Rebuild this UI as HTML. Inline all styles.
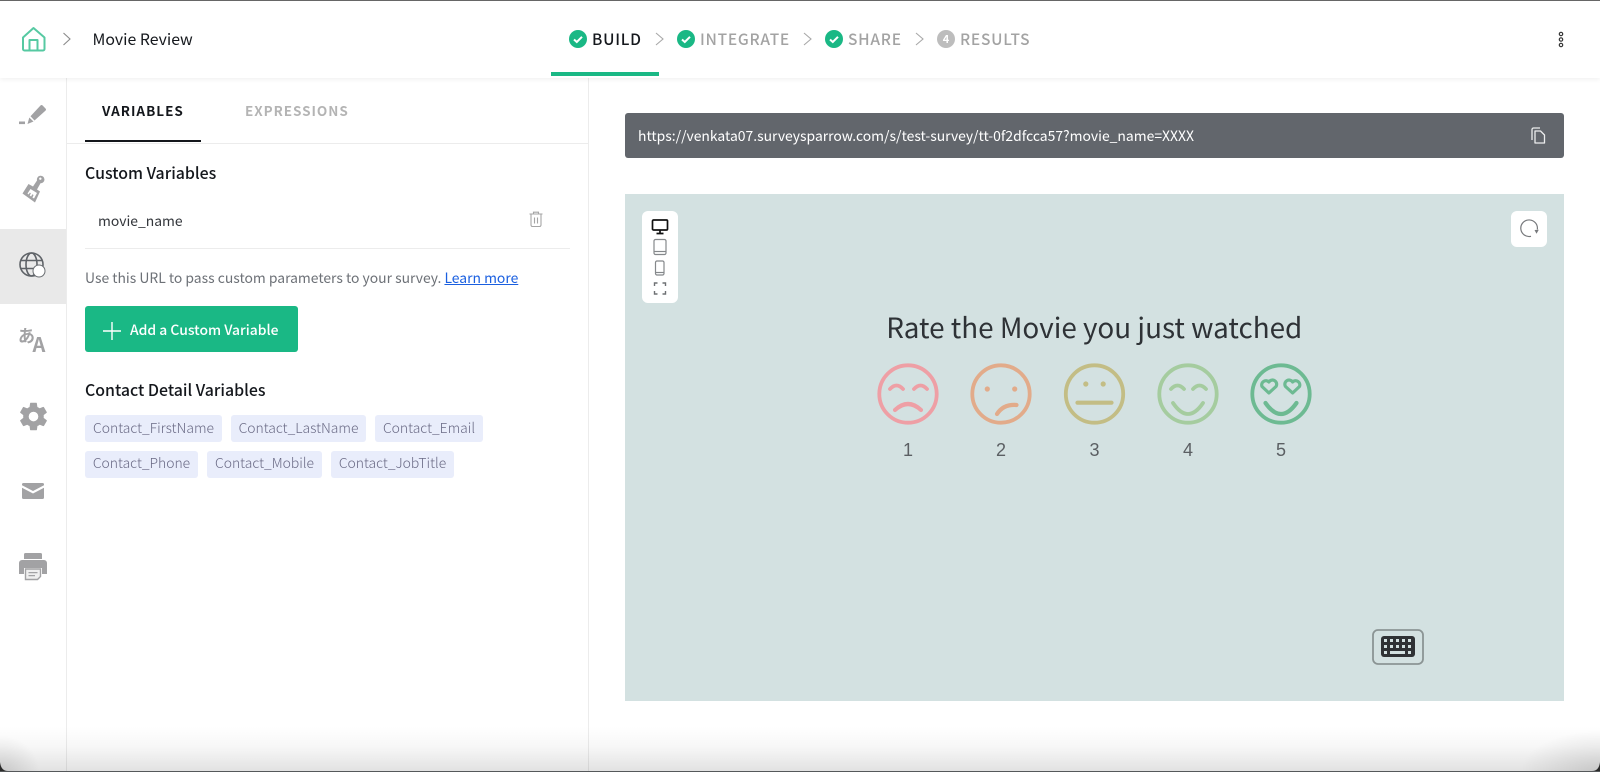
<!DOCTYPE html>
<html lang="en"><head><meta charset="utf-8"><title>Movie Review</title>
<style>
html,body{margin:0;padding:0;background:#fff}
body{width:1600px;height:772px;position:relative;overflow:hidden;font-family:"Noto Sans CJK JP","Liberation Sans",sans-serif;color:#14171c}
.a{position:absolute;white-space:nowrap}
svg{position:absolute;overflow:visible}
.chip{position:absolute;height:27px;line-height:26px;background:#e9edfb;border-radius:3px;color:#6a6a85;font-size:13.900px;text-align:center;font-weight:300}
.st{position:absolute;top:27.500px;line-height:22px;font-size:15.500px;font-weight:500;letter-spacing:.75px;color:#a3a3a3}
</style></head><body>
<div class="a" style="left:0;top:0;width:1600px;height:1.300px;background:#666;z-index:4"></div>
<div class="a" style="left:0;top:1px;width:1600px;height:77px;background:#fff;box-shadow:0 1px 5px rgba(0,0,0,.07);z-index:2"></div>
<div style="position:absolute;left:0;top:0;width:1600px;height:78px;z-index:3">
<svg style="left:22px;top:27px" width="24" height="25" viewBox="0 0 24 25" fill="none" stroke="#56c9a2" stroke-width="2" stroke-linejoin="round"><path d="M1 10.500 11.500 1 22.500 10.500V22a1.500 1.500 0 0 1-1.500 1.500H2.500A1.500 1.500 0 0 1 1 22Z"/><path d="M7.500 23.500V13h8v10.500"/></svg>
<svg style="left:62px;top:32px" width="10" height="14" viewBox="0 0 10 14" fill="none" stroke="#8a8a8a" stroke-width="1.100"><path d="M1.500 1 8 7 1.500 13"/></svg>
<div class="a" style="left:92.500px;top:27px;font-size:15.850px;line-height:24px;color:#15181d">Movie Review</div>
<svg style="left:569px;top:30px" width="18" height="18" viewBox="0 0 18 18"><circle cx="9" cy="9" r="9" fill="#1ab885"/><path d="M5 9.500 7.800 12 13 6.800" fill="none" stroke="#fff" stroke-width="2"/></svg>
<div class="st" style="left:592px;color:#15181d">BUILD</div>
<svg style="left:655px;top:32px" width="9" height="14" viewBox="0 0 9 14" fill="none" stroke="#a8a8a8" stroke-width="1.100"><path d="M1 1 8 7 1 13"/></svg>
<svg style="left:677px;top:30px" width="18" height="18" viewBox="0 0 18 18"><circle cx="9" cy="9" r="9" fill="#1ab885"/><path d="M5 9.500 7.800 12 13 6.800" fill="none" stroke="#fff" stroke-width="2"/></svg>
<div class="st" style="left:700px">INTEGRATE</div>
<svg style="left:803px;top:32px" width="9" height="14" viewBox="0 0 9 14" fill="none" stroke="#a8a8a8" stroke-width="1.100"><path d="M1 1 8 7 1 13"/></svg>
<svg style="left:825px;top:30px" width="18" height="18" viewBox="0 0 18 18"><circle cx="9" cy="9" r="9" fill="#1ab885"/><path d="M5 9.500 7.800 12 13 6.800" fill="none" stroke="#fff" stroke-width="2"/></svg>
<div class="st" style="left:848px">SHARE</div>
<svg style="left:915px;top:32px" width="9" height="14" viewBox="0 0 9 14" fill="none" stroke="#a8a8a8" stroke-width="1.100"><path d="M1 1 8 7 1 13"/></svg>
<div class="a" style="left:937px;top:30px;width:18px;height:18px;border-radius:50%;background:#bdbdbd;color:#fff;font-size:11px;line-height:18px;text-align:center;font-weight:700">4</div>
<div class="st" style="left:960px">RESULTS</div>
<div class="a" style="left:551px;top:72px;width:108px;height:4px;background:#1ab885"></div>
<svg style="left:1558px;top:30.500px" width="6" height="17" viewBox="0 0 6 17" fill="none" stroke="#333" stroke-width="1.200"><circle cx="3" cy="3" r="1.700"/><circle cx="3" cy="8.500" r="1.700"/><circle cx="3" cy="14" r="1.700"/></svg>
</div>

<div class="a" style="left:66px;top:78px;width:1px;height:694px;background:#ececec"></div>
<div class="a" style="left:588px;top:78px;width:1px;height:694px;background:#ececec"></div>
<div class="a" style="left:0;top:229px;width:66px;height:75px;background:#e9e9e9"></div>

<svg style="left:0;top:0" width="66" height="240" viewBox="0 0 66 240" fill="#a2a2a4">
<path d="M19 121.500h6v2.600h-6z"/>
<path d="M27.500 124 29.300 117.500 33.500 121.500Z"/>
<path d="M30.500 116.200 40.500 105.500a1.500 1.500 0 0 1 2.100 0L45.500 108.500a1.500 1.500 0 0 1 0 2.100L34.500 120.500Z"/>
<path fill-rule="evenodd" d="M28.500 184 33 186.500 37 180.500a3.800 3.800 0 1 1 3.500 2.800L37 189.500 40 191.500 35 202.500 22.500 193.500ZM40.200 177.500a1.200 1.200 0 1 0 1.300 1.400 1.200 1.200 0 0 0-1.300-1.400Z"/>
<path d="M27.500 193.500l3-4.500 6.500 4-3 5.500-1.600-1 1.200-2.500-1.200-.8-1.300 2.300-1.400-1 1.200-2.200-1-.7-1.300 1.900Z" fill="#fff"/>
</svg>
<svg style="left:19px;top:252px" width="28" height="28" viewBox="0 0 28 28" fill="none" stroke="#5f6368" stroke-width="1.600"><circle cx="12.500" cy="12.500" r="11.500"/><ellipse cx="12.500" cy="12.500" rx="5.500" ry="11.500"/><path d="M1.500 8.500h22M1.500 16.500h22"/><circle cx="20" cy="19" r="6" fill="#fff" stroke="#6a6e72" stroke-width="1"/></svg>
<div class="a" style="left:18px;top:325px;font-size:17px;line-height:20px;color:#a2a2a4;font-weight:700;font-family:'Noto Sans CJK JP',sans-serif">あ</div>
<div class="a" style="left:32.500px;top:332px;font-size:20px;line-height:24px;color:#a2a2a4;font-weight:700">A</div>
<svg style="left:16.500px;top:399.500px" width="33" height="33" viewBox="0 0 24 24" fill="#a2a2a4"><path fill-rule="evenodd" d="M19.400 13c.04-.33.06-.66.06-1s-.02-.67-.07-1l2.100-1.650c.2-.15.25-.42.12-.64l-2-3.460c-.12-.22-.39-.3-.61-.22l-2.490 1c-.52-.4-1.080-.73-1.690-.98l-.38-2.650A.49.49 0 0 0 14 2h-4c-.25 0-.46.18-.49.42l-.38 2.650c-.61.25-1.170.59-1.690.98l-2.490-1a.5.5 0 0 0-.61.22l-2 3.460c-.13.22-.07.49.12.64L4.570 11c-.05.33-.07.67-.07 1s.02.67.07 1l-2.110 1.650c-.19.15-.24.42-.12.64l2 3.460c.12.22.39.3.61.22l2.490-1c.52.4 1.080.73 1.690.98l.38 2.650c.03.24.24.42.49.42h4c.25 0 .46-.18.49-.42l.38-2.650c.61-.25 1.170-.59 1.690-.98l2.490 1c.22.08.49 0 .61-.22l2-3.460c.12-.22.07-.49-.12-.64ZM12 15.500a3.500 3.500 0 1 1 0-7 3.500 3.500 0 0 1 0 7Z"/></svg>
<svg style="left:22px;top:483px" width="22" height="16" viewBox="0 0 22 16" fill="#a2a2a4"><path d="M1.500 0h19A1.500 1.500 0 0 1 22 1.500v.8L11 8 0 2.300v-.8A1.500 1.500 0 0 1 1.500 0Z"/><path d="M0 4.700 11 10.500 22 4.700v9.800A1.500 1.500 0 0 1 20.500 16h-19A1.500 1.500 0 0 1 0 14.500Z"/></svg>
<svg style="left:19px;top:553px" width="28" height="27" viewBox="0 0 28 27" fill="#a2a2a4"><path d="M5 1.500A1.500 1.500 0 0 1 6.500 0h15A1.500 1.500 0 0 1 23 1.500V6H5Z"/><path d="M3 7h22a3 3 0 0 1 3 3V21h-5v-6H5v6H0V10a3 3 0 0 1 3-3Z"/><path d="M6.500 16h15v7.500l-3 3h-12Z" fill="#efefef" stroke="#a2a2a4" stroke-width="1.400"/><path d="M9.500 19h9v1.200h-9zM9.500 22h6.500v1.200H9.500z"/></svg>

<div class="a" style="left:102px;top:99px;font-size:13.500px;line-height:22px;font-weight:700;letter-spacing:1px;color:#14171c">VARIABLES</div>
<div class="a" style="left:245px;top:99px;font-size:13.500px;line-height:22px;font-weight:700;letter-spacing:.95px;color:#b4b4b4">EXPRESSIONS</div>
<div class="a" style="left:67px;top:142.500px;width:521px;height:1px;background:#ececec"></div>
<div class="a" style="left:85px;top:140px;width:116px;height:2px;background:#14171c"></div>

<div class="a" style="left:85px;top:161px;font-size:15.900px;line-height:24px;font-weight:500;color:#14171c">Custom Variables</div>
<div class="a" style="left:98px;top:209px;font-size:13.900px;line-height:24px;color:#33363b">movie_name</div>
<svg style="left:529px;top:211px" width="14" height="16" viewBox="0 0 14 16" fill="none" stroke="#a5a5a5" stroke-width="1.100"><path d="M.5 3h13M4.500 3V1.200h5V3M2 3v11a1.500 1.500 0 0 0 1.500 1.500h7A1.500 1.500 0 0 0 12 14V3M5.500 6.500v6M8.500 6.500v6"/></svg>
<div class="a" style="left:85px;top:247.500px;width:485px;height:1px;background:#ececec"></div>
<div class="a" style="left:85px;top:267px;font-size:13.900px;line-height:22px;color:#6d7177;font-weight:400">Use this URL to pass custom parameters to your survey. <span style="color:#1a5fe0;text-decoration:underline">Learn more</span></div>
<div class="a" style="left:85px;top:306px;width:213px;height:46px;background:#1ab885;border-radius:3px"></div>
<svg style="left:103px;top:321.500px" width="18" height="18" viewBox="0 0 18 18" stroke="#fff" stroke-width="1.400"><path d="M9 0v18M0 9h18"/></svg>
<div class="a" style="left:130px;top:319px;font-size:13.900px;line-height:22px;font-weight:500;color:#fff">Add a Custom Variable</div>
<div class="a" style="left:85px;top:378px;font-size:15.900px;line-height:24px;font-weight:500;color:#14171c">Contact Detail Variables</div>
<div class="chip" style="left:85px;top:415px;width:137px">Contact_FirstName</div>
<div class="chip" style="left:231px;top:415px;width:135px">Contact_LastName</div>
<div class="chip" style="left:375px;top:415px;width:108px">Contact_Email</div>
<div class="chip" style="left:85px;top:451px;width:113px;line-height:25.500px">Contact_Phone</div>
<div class="chip" style="left:207px;top:451px;width:115px;line-height:25.500px">Contact_Mobile</div>
<div class="chip" style="left:331px;top:451px;width:123px;line-height:25.500px">Contact_JobTitle</div>

<div class="a" style="left:624.500px;top:113px;width:939.500px;height:45px;background:#62666c;border-radius:3px"></div>
<div class="a" style="left:638px;top:125px;font-size:13.920px;line-height:22px;color:#fff">https://venkata07.surveysparrow.com/s/test-survey/tt-0f2dfcca57?movie_name=XXXX</div>
<svg style="left:1530px;top:127px" width="16" height="17" viewBox="0 0 16 17" fill="none" stroke="#eceded" stroke-width="1.300"><path d="M2 13V2.500A1.500 1.500 0 0 1 3.500 1H10"/><path d="M5 4h5.500L14.500 8v8H5Z" stroke-linejoin="round"/></svg>

<div class="a" style="left:624.500px;top:194px;width:939.500px;height:507px;background:#d3e1e1"></div>
<div class="a" style="left:642px;top:211px;width:36px;height:92px;background:#fff;border-radius:6px"></div>
<svg style="left:651px;top:219px" width="18" height="78" viewBox="0 0 18 78" fill="none" stroke="#85888b" stroke-width="1.200"><rect x="1.500" y="1" width="15" height="10" rx="1" stroke="#111" stroke-width="1.700"/><path d="M5.500 14.500h7M9 11v3" stroke="#111" stroke-width="1.700"/><rect x="3" y="20.500" width="12" height="15" rx="1.500"/><path d="M3 32.500h12"/><rect x="4.500" y="42" width="8.500" height="14" rx="1.500"/><path d="M4.500 53.500h8.500"/><path d="M3.500 67v-3h3M11.500 64h3v3M14.500 72v3h-3M6.500 75h-3v-3" stroke="#6e7174" stroke-width="1.400"/></svg>
<div class="a" style="left:1511px;top:211px;width:36px;height:36px;background:#fff;border-radius:6px"></div>
<svg style="left:1520px;top:219px" width="18" height="18" viewBox="0 0 18 18" fill="none" stroke="#77797c" stroke-width="1.200"><path d="M11 17.300A8.300 8.300 0 1 1 17.300 10.500"/><path d="M14.500 11 18.800 10.700 16.500 14.800Z" fill="#77797c" stroke="none"/></svg>

<div class="a" style="left:624.500px;width:939.500px;top:306px;text-align:center;font-size:27.850px;line-height:42px;color:#2e3236;font-weight:400">Rate the Movie you just watched</div>

<svg style="left:876px;top:363px" width="440" height="64" viewBox="0 0 440 64" fill="none" stroke-width="3.800" stroke-linecap="round">
<g stroke="#ee9fa5" transform="translate(32,31)"><circle r="28.700"/><path d="M-18-5q6.500-7 13 0M6-5q6.500-7 13 0"/><path d="M-13 16q13-12 26 0" stroke-width="4.200"/></g>
<g stroke="#e2ab8a" transform="translate(125,31)"><circle r="28.700"/><path d="M15.500 11q-13-1-19.500 9" stroke-width="4.200"/></g>
<circle cx="111.300" cy="26" r="2.600" fill="#e2ab8a" stroke="none"/><circle cx="138.700" cy="26" r="2.600" fill="#e2ab8a" stroke="none"/>
<g stroke="#c3bd85" transform="translate(218.500,31)"><circle r="28.700"/><path d="M-17 8.700h34" stroke-width="4.200"/></g>
<circle cx="209.800" cy="21" r="2.600" fill="#c3bd85" stroke="none"/><circle cx="227.200" cy="21" r="2.600" fill="#c3bd85" stroke="none"/>
<g stroke="#a5cc9f" transform="translate(312,31)"><circle r="28.700"/><path d="M-17-5q6.500-7 13 0M5-5q6.500-7 13 0"/><path d="M-15 9q15 22 30 0"/></g>
<g stroke="#6dba92" transform="translate(405,31)"><circle r="28.700"/><path d="M-15.500 9q15.500 22 31 0" stroke-width="4.200"/><path d="M-12.100-1-19-7.500A4.200 4.200 0 0 1-12.100-12 4.200 4.200 0 0 1-5-7.500Z" stroke-width="3.200" stroke-linejoin="round"/><path d="M11.600-1 4.500-7.500A4.200 4.200 0 0 1 11.600-12 4.200 4.200 0 0 1 18.500-7.500Z" stroke-width="3.200" stroke-linejoin="round"/></g>
</svg>
<div class="a" style="left:888px;width:40px;top:439px;text-align:center;font:18px/22px 'Liberation Sans',sans-serif;color:#5b5f63">1</div>
<div class="a" style="left:981px;width:40px;top:439px;text-align:center;font:18px/22px 'Liberation Sans',sans-serif;color:#5b5f63">2</div>
<div class="a" style="left:1074.500px;width:40px;top:439px;text-align:center;font:18px/22px 'Liberation Sans',sans-serif;color:#5b5f63">3</div>
<div class="a" style="left:1168px;width:40px;top:439px;text-align:center;font:18px/22px 'Liberation Sans',sans-serif;color:#5b5f63">4</div>
<div class="a" style="left:1261px;width:40px;top:439px;text-align:center;font:18px/22px 'Liberation Sans',sans-serif;color:#5b5f63">5</div>

<svg style="left:1372px;top:629px" width="52" height="36" viewBox="0 0 52 36"><rect x="1" y="1" width="50" height="34" rx="5" fill="none" stroke="#8b9494" stroke-width="1.800"/><rect x="9" y="7" width="34" height="21" rx="3" fill="#2f3235"/><g fill="#d3e1e1"><rect x="12" y="10" width="3" height="3"/><rect x="18" y="10" width="3" height="3"/><rect x="24" y="10" width="3" height="3"/><rect x="30" y="10" width="3" height="3"/><rect x="36" y="10" width="3" height="3"/><rect x="12" y="16" width="3" height="3"/><rect x="18" y="16" width="3" height="3"/><rect x="24" y="16" width="3" height="3"/><rect x="30" y="16" width="3" height="3"/><rect x="36" y="16" width="3" height="3"/><rect x="12" y="22" width="3" height="3"/><rect x="18" y="22" width="15" height="3"/><rect x="36" y="22" width="3" height="3"/></g></svg>

<div class="a" style="left:0;top:726px;width:1600px;height:45px;background:linear-gradient(to bottom,rgba(0,0,0,0),rgba(0,0,0,.03) 45%,rgba(0,0,0,.115));z-index:5"></div>
<div class="a" style="left:0;top:735px;width:40px;height:36px;background:radial-gradient(ellipse at 0 100%,rgba(0,0,0,.12),rgba(0,0,0,0) 70%);z-index:5"></div>
<div class="a" style="left:1520px;top:730px;width:80px;height:41px;background:radial-gradient(ellipse at 100% 100%,rgba(0,0,0,.12),rgba(0,0,0,0) 70%);z-index:5"></div>
<svg style="left:0;top:0;z-index:6" width="1600" height="772" viewBox="0 0 1600 772" fill="#2a2a2a"><path d="M0 762Q1 771 8 771H0ZM1600 762Q1599 771 1592 771H1600Z"/></svg>
<div class="a" style="left:0;top:771px;width:1600px;height:1px;background:#55585a;z-index:6"></div>
</body></html>
